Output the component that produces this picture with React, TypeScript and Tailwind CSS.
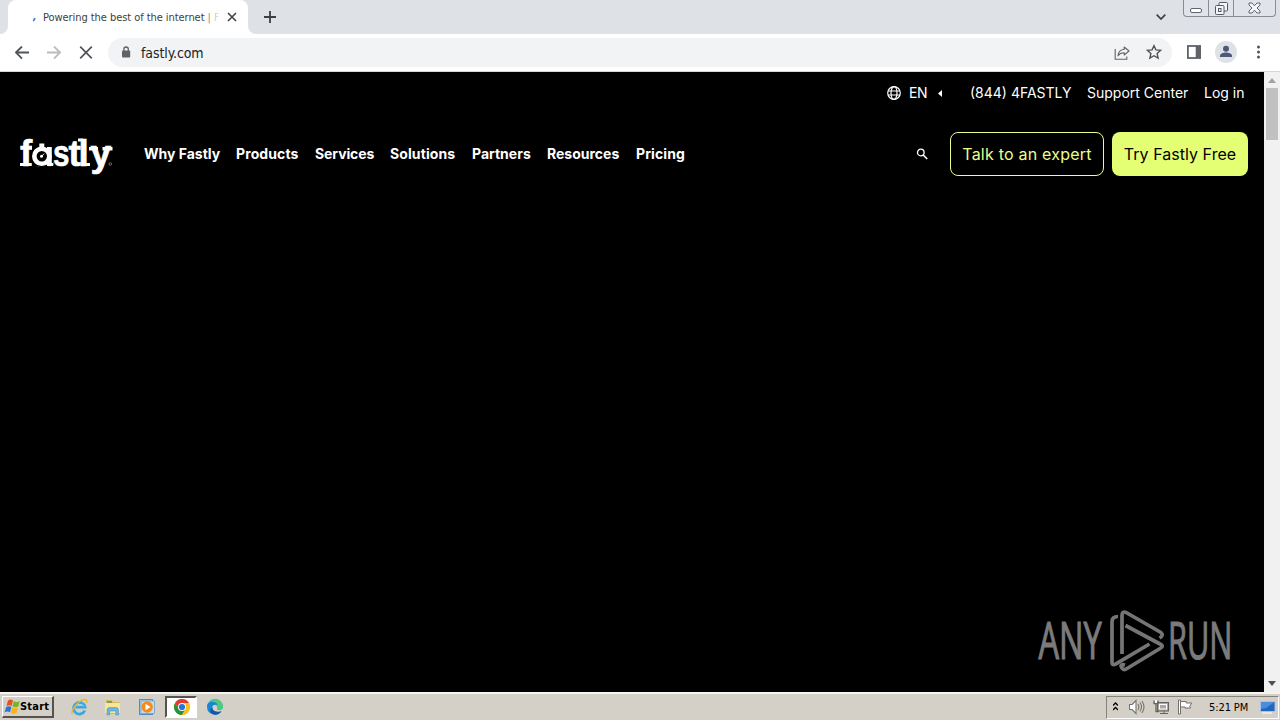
import React from "react";

const TAHOMA = "font-['DejaVu_Sans_Condensed','DejaVu_Sans',sans-serif] [font-stretch:condensed]";

function Tab() {
  return (
    <div className="flex h-[34px] w-[256px] items-end">
      <div className="h-2 w-2 bg-white">
        <div className="h-2 w-2 rounded-br-[8px] bg-[#dee1e6]" />
      </div>
      <div className="flex h-[34px] w-[240px] items-center rounded-t-[8px] bg-white">
        <svg className="ml-[22px] mt-[4px] h-[8px] w-[8px]" viewBox="0 0 8 8">
          <path d="M3.200 6Q4.500 5.500 4.700 3" fill="none" stroke="#3b78d8" strokeWidth="1.800" />
        </svg>
        <div className={`relative ml-[5px] mt-[1px] h-[16px] w-[177px] overflow-hidden whitespace-nowrap text-[11px] leading-[16px] tracking-[-0.060px] text-[#3c4043] ${TAHOMA}`}>
          Powering the best of the internet | F
          <div className="absolute right-0 top-0 h-4 w-[12px] bg-gradient-to-r from-white/30 to-white" />
        </div>
        <svg className="ml-[7px] h-[10px] w-[10px]" viewBox="0 0 10 10">
          <path d="M1 1L9 9M9 1L1 9" stroke="#45494d" strokeWidth="1.700" />
        </svg>
      </div>
      <div className="h-2 w-2 bg-white">
        <div className="h-2 w-2 rounded-bl-[8px] bg-[#dee1e6]" />
      </div>
    </div>
  );
}

function WindowControls() {
  return (
    <div className="mr-[4px] flex h-[17px] w-[93px] self-start rounded-b-[4px] border border-t-0 border-[#888c94] bg-[#e0e3e9]">
      <div className="flex w-[25px] justify-center border-r border-[#888c94] pt-[8px]">
        <div className="h-[5px] w-[12px] rounded-[2px] border border-[#60656d] bg-white" />
      </div>
      <div className="flex w-[25px] justify-center border-r border-[#888c94] pt-[2px]">
        <svg className="h-[13px] w-[13px]" viewBox="0 0 13 13" fill="#f5f6f8" stroke="#555a62">
          <rect x="4" y=".5" width="8.5" height="8.5" rx="1" />
          <rect x=".5" y="3.5" width="8.5" height="9" rx="1" />
          <rect x="3.5" y="6.5" width="2.5" height="3" />
        </svg>
      </div>
      <div className="flex flex-1 justify-center pt-[2px]">
        <svg className="h-[12px] w-[13px]" viewBox="0 0 13 12">
          <path d="M1 1h3l2.500 2.800L9 1h3v2L9 6l3 3v2H9L6.500 8.200 4 11H1V9l3-3-3-3z" fill="#f5f6f8" stroke="#60656d" />
        </svg>
      </div>
    </div>
  );
}

function Toolbar() {
  return (
    <div className="flex h-[37px] items-center bg-white">
      <svg className="ml-[15px] h-[14px] w-[14px]" viewBox="0 0 14 14" fill="none" stroke="#505357" strokeWidth="1.8">
        <path d="M14 6.500H1.500M7 .5L.9 6.500 7 12.700" />
      </svg>
      <svg className="ml-[18px] h-[14px] w-[14px]" viewBox="0 0 14 14" fill="none" stroke="#b9bbbe" strokeWidth="1.8">
        <path d="M0 6.500h12.500M7 .5L13.100 6.500 7 12.700" />
      </svg>
      <svg className="ml-[18px] h-[14px] w-[14px]" viewBox="0 0 14 14" fill="none" stroke="#505357" strokeWidth="1.7">
        <path d="M1.200 .700L12.800 12.300M12.800 .700L1.200 12.300" />
      </svg>
      <div className="ml-[15px] flex h-[29px] w-[1064px] items-center rounded-full bg-[#f1f3f4]">
        <svg className="ml-[13px] mt-[-2px] h-[12px] w-[10px]" viewBox="0 0 10 12">
          <rect x="1" y="4.500" width="8.200" height="7" rx="1" fill="#5f6368" />
          <path d="M2.900 5V3.200a2.200 2.200 0 014.400 0V5" fill="none" stroke="#5f6368" strokeWidth="1.300" />
        </svg>
        <span className={`ml-[10px] text-[14px] leading-[20px] tracking-[-0.100px] text-[#202124] ${TAHOMA}`}>fastly.com</span>
        <svg className="ml-auto h-[14px] w-[16px]" viewBox="0 0 16 14" fill="none" stroke="#5f6368" strokeWidth="1.100">
          <path d="M1.200 3v10.200h11.600v-2.700" />
          <path d="M10.200 1l4.800 4-4.800 4V6.700C7.300 6.600 5.300 7.800 4 9.800 4.400 6.400 6.400 3.700 10.200 3.300z" strokeLinejoin="round" />
        </svg>
        <svg className="ml-[16px] mr-[10px] mt-[-1px] h-[16px] w-[16px]" viewBox="0 0 16 16">
          <path d="M8 1.700l1.900 4.200 4.600.5-3.400 3.100 1 4.500L8 11.700 3.900 14l1-4.500L1.500 6.400l4.600-.5z" fill="none" stroke="#505357" strokeWidth="1.400" />
        </svg>
      </div>
      <svg className="ml-[15px] mt-[-1px] h-[14px] w-[14px]" viewBox="0 0 14 14">
        <rect x=".9" y="1" width="12.200" height="12" fill="white" stroke="#5f6368" strokeWidth="1.800" />
        <rect x="8.700" y="1" width="4.500" height="12" fill="#5f6368" />
      </svg>
      <svg className="ml-[14px] mt-[-1px] h-[22px] w-[22px]" viewBox="0 0 22 22">
        <circle cx="11" cy="11" r="11" fill="#dee1e6" />
        <circle cx="11" cy="7.800" r="3" fill="#4b5879" />
        <path d="M5 16v-1.300c0-2.200 3.500-3.200 6-3.200s6 1 6 3.200V16z" fill="#4b5879" />
      </svg>
      <svg className="ml-[19px] mt-[-1px] h-[14px] w-[4px]" viewBox="0 0 4 14" fill="#505357">
        <circle cx="2.500" cy="2" r="1.500" />
        <circle cx="2.500" cy="7" r="1.500" />
        <circle cx="2.500" cy="12" r="1.500" />
      </svg>
    </div>
  );
}

function Logo() {
  return (
    <svg className="h-[40px] w-[96px] overflow-visible" viewBox="0 0 96 40">
      <g fill="white" stroke="white" strokeWidth=".6" className="font-['Liberation_Sans',sans-serif] text-[37px] font-bold">
        <text x="0 12" y="31.700">fa</text>
        <text x="33" y="31.700" textLength="16.500" lengthAdjust="spacingAndGlyphs">s</text>
        <text x="48.500 58.500 70.500" y="31.700">tly</text>
      </g>
      <path d="M0 29h11.500v3H0zM58 4.500h5v3h-5zM66 29h4v3h-4zM69 13h9v3.500h-9zM82.500 13h10v3.500h-10z" fill="white" />
      <path d="M12 9h21v23.500H12z" fill="black" />
      <circle cx="21.800" cy="22.300" r="7.500" fill="#000" stroke="#fff" strokeWidth="4.600" />
      <path d="M19.300 9.500h5v4h-5zM27 13h4.800v16H33v3h-6z" fill="white" />
      <path d="M0 29h11.500v3H0z" fill="white" />
      <circle cx="21.500" cy="22.300" r="1.500" fill="white" />
      <path d="M21.500 22.300l2.700-2.700" stroke="white" />
      <circle cx="90.300" cy="30" r="1.300" fill="none" stroke="#aaa" strokeWidth=".6" />
    </svg>
  );
}

function Website() {
  return (
    <main className="flex h-[620px] w-[1264px] flex-col bg-black font-['Inter',sans-serif] text-white">
      <div className="flex h-[42px] items-center justify-end pr-[20px] text-[14px] leading-[20px]">
        <svg className="h-[14px] w-[14px]" viewBox="0 0 14 14" fill="none" stroke="white" strokeWidth="1.200">
          <circle cx="7" cy="7" r="6.300" />
          <ellipse cx="7" cy="7" rx="3" ry="6.300" />
          <path d="M1 5h12M1 9h12" />
        </svg>
        <span className="ml-[8px] w-[19px] tracking-[-0.300px]">EN</span>
        <svg className="ml-[10px] h-[7px] w-[4px]" viewBox="0 0 4 7"><path d="M4 0v7L0 3.500z" fill="white" /></svg>
        <span className="ml-[28px] w-[101px] whitespace-nowrap">(844) 4FASTLY</span>
        <span className="ml-[16px] w-[101px] whitespace-nowrap">Support Center</span>
        <span className="ml-[16px] w-[40px] whitespace-nowrap">Log in</span>
      </div>
      <header className="flex h-[80px] items-center pl-[20px] pr-[16px]">
        <Logo />
        <nav className="ml-[28px] flex gap-[16px] whitespace-nowrap text-[14px] font-bold leading-[20px]">
          <span className="w-[76px]">Why Fastly</span>
          <span className="w-[63px] tracking-[0.100px]">Products</span>
          <span className="w-[59px] tracking-[-0.100px]">Services</span>
          <span className="w-[66px] tracking-[0.100px]">Solutions</span>
          <span className="w-[59px]">Partners</span>
          <span className="w-[73px]">Resources</span>
          <span className="w-[49px] tracking-[0.100px]">Pricing</span>
        </nav>
        <svg className="ml-auto mr-[22px] h-[12px] w-[12px]" viewBox="0 0 12 12" fill="none" stroke="white" strokeWidth="1.300">
          <circle cx="4.800" cy="4.500" r="3.300" />
          <path d="M7.200 7l4 4" strokeWidth="1.600" />
        </svg>
        <button className="h-[44px] w-[154px] whitespace-nowrap rounded-[8px] border border-[#e9ff8e] text-[16px] tracking-[0.220px] text-[#e9ff8e]">Talk to an expert</button>
        <button className="ml-[8px] h-[44px] w-[136px] whitespace-nowrap rounded-[8px] bg-[#e5ff75] text-[16px] tracking-[0.040px] text-black">Try Fastly Free</button>
      </header>
      <div className="mt-auto flex h-[84px] justify-end pr-[34px]">
        <svg className="h-[64px] w-[196px] overflow-visible" viewBox="0 0 196 64">
          <g fill="#7b7b7b" stroke="#7b7b7b" strokeWidth="1.200" className="font-['Open_Sans','Liberation_Sans',sans-serif]">
            <g transform="translate(0 51) scale(.55 1)"><text x="8" y="0" fontSize="51" textLength="115" lengthAdjust="spacingAndGlyphs">ANY</text></g>
            <g transform="translate(134 51) scale(.55 1)"><text x="0" y="0" fontSize="51" textLength="117" lengthAdjust="spacingAndGlyphs">RUN</text></g>
          </g>
          <g fill="none" stroke="#757575" strokeWidth="3.700" strokeLinejoin="round">
            <path d="M84 8.500Q78 8.500 78 14v40q0 4 3.500 2.200L115.500 36" />
            <path d="M88 46V8q0-6 5-3l34 19.500q3 3-1.500 5.500" />
            <path d="M91.500 17.500L126 36q4.500 2 0 4.500L93 60.500q-4.500 3-6-2.500 0-2 4-1" />
          </g>
        </svg>
      </div>
    </main>
  );
}

function Scrollbar() {
  return (
    <div className="flex h-[620px] w-[16px] flex-col items-center bg-[#f1f1f1]">
      <div className="flex h-[16px] items-center"><svg className="h-[5px] w-[8px]" viewBox="0 0 8 5"><path d="M4 0l4 5H0z" fill="#a3a3a3" /></svg></div>
      <div className="h-[52px] w-[12px] bg-[#c1c1c1]" />
      <div className="mt-auto flex h-[18px] items-center"><svg className="h-[5px] w-[8px]" viewBox="0 0 8 5"><path d="M4 5l4-5H0z" fill="#505050" /></svg></div>
    </div>
  );
}

function Chrome() {
  return (
    <svg className="ml-[1px] h-[16px] w-[16px]" viewBox="0 0 16 16">
      <circle cx="8" cy="8" r="8" fill="#fbc116" />
      <path d="M1.070 4A8 8 0 0114.930 4H8L4.540 10z" fill="#e33b2e" />
      <path d="M1.070 4L4.540 10 8 12l.001 4A8 8 0 011.070 4z" fill="#229342" />
      <path d="M8 16l3.460-6H4.540L6 13z" fill="#229342" />
      <path d="M14.930 4A8 8 0 018 16l3.460-6L8 4z" fill="#fbc116" />
      <circle cx="8" cy="8" r="4" fill="white" />
      <circle cx="8" cy="8" r="3.100" fill="#2873df" />
    </svg>
  );
}

function Taskbar() {
  return (
    <footer className="flex h-[28px] items-center border-t-2 border-t-[#f5f3ee] bg-[#d4d0c8]">
      <div className="ml-[2px] flex h-[22px] w-[52px] items-center border-b-2 border-l border-r-2 border-t border-b-[#55534f] border-l-white border-r-[#55534f] border-t-white">
        <svg className="ml-[1px] h-[16px] w-[16px]" viewBox="0 0 16 16">
          <path d="M4 1.500q3-1.800 5 0L7.700 7q-2.300-1.500-5.200 0z" fill="#e8501f" />
          <path d="M9.800 2q2.700 1.800 6 0l-1.500 5.500q-3 1.500-5.800 0z" fill="#75b42b" />
          <path d="M2.200 8q3-1.500 5.200 0L6 13.300q-2.500-1.500-5.500 0z" fill="#2d76cf" />
          <path d="M8.200 8.500q3 1.500 5.800 0l-1.500 5.500q-3 1.500-5.800 0z" fill="#f6b31b" />
        </svg>
        <span className="text-[11px] font-bold leading-[14px] tracking-[0.200px] text-black font-['DejaVu_Sans_Condensed','DejaVu_Sans',sans-serif]">Start</span>
      </div>
      <svg className="ml-[16px] h-[18px] w-[18px]" viewBox="0 0 18 18" fill="none">
        <path d="M14.800 12.500a5.800 5.800 0 11.300-3.300H5.500" stroke="#3ca6df" strokeWidth="2.800" />
        <path d="M4 10.500q1-4 5.200-4t5 2" stroke="#9bdcf5" strokeWidth=".8" />
        <path d="M2.500 16C-.5 14 10-.5 16 1.800q1.500 1 .4 3" stroke="#e6b72f" strokeWidth="1.400" />
      </svg>
      <svg className="ml-[16px] h-[17px] w-[18px]" viewBox="0 0 18 17">
        <path d="M2 1h6l1 2h7v12H2z" fill="#dfb956" />
        <path d="M1 4h15v10H1z" fill="#f8e599" />
        <path d="M3 2h5v2H3z" fill="#70a36e" />
        <path d="M3 16v-5q0-2.500 2.500-2.500h6.500q2.500 0 2.500 2.500v5h-2.700v-4H5.700v4z" fill="#6cb6dc" stroke="#4a91b5" strokeWidth=".5" />
      </svg>
      <svg className="ml-[17px] h-[16px] w-[16px]" viewBox="0 0 16 16">
        <rect x=".5" y=".5" width="13" height="15" fill="#a9d0ef" stroke="#548dbd" />
        <rect x="2" y="2" width="13.500" height="12.500" fill="#c3def4" stroke="#6999c2" strokeWidth=".7" />
        <circle cx="8.200" cy="8" r="5.700" fill="#f28c1a" />
        <path d="M6.500 4.700v6.600L11.600 8z" fill="white" />
      </svg>
      <div className="ml-[10px] flex h-[22px] w-[32px] items-center justify-center border-2 border-b-white border-l-[#55534f] border-r-white border-t-[#55534f] bg-white"><Chrome /></div>
      <svg className="ml-[10px] h-[16px] w-[16px]" viewBox="0 0 16 16">
        <path d="M0 8a8 8 0 0116 0c0 3-4 4-6 2.500 1-1 .5-4-2-4.500C4 5 1 6 0 8z" fill="#38bdc0" />
        <path d="M8 0a8 8 0 018 8c0 3-4 4-6 2.500C12 7 8 4 2 3A8 8 0 018 0z" fill="#50c782" />
        <path d="M0 8C0 2 8 1 11 6 9 4.500 4 6 5.500 10c1 2.500 5 3.500 9 2.300A8 8 0 010 8z" fill="#1687d5" />
        <path d="M5.500 8.500c-.3 4 4.500 5.500 9 3.800-3 4.500-9 4.500-11 1C2.600 11 4 9 5.500 8.500z" fill="#1557a4" />
      </svg>
      <div className="ml-auto mr-[1px] flex h-[23px] w-[173px] items-center border border-b-white border-l-[#85827d] border-r-white border-t-[#85827d]">
        <svg className="ml-[6px] mt-[-2px] h-[9px] w-[5px]" viewBox="0 0 5 9" fill="none" stroke="black" strokeWidth="1.300"><path d="M0 3.500L2.500 1 5 3.500M0 8l2.500-2.500L5 8" /></svg>
        <svg className="ml-[11px] h-[16px] w-[17px]" viewBox="0 0 17 16" stroke="#77756f" strokeWidth="1.100" fill="none">
          <path d="M.500 5.500h2.700L7 1.500v13l-3.800-4H.500z" fill="white" />
          <path d="M9 5q1.700 3 0 6M11 3.500q3 4.500 0 9M13 2q4 6 0 12" />
        </svg>
        <svg className="ml-[7px] h-[16px] w-[17px]" viewBox="0 0 17 16" fill="none" stroke="#65635e">
          <rect x="4.500" y="3.500" width="11" height="8.500" fill="#aaa8a3" />
          <rect x="6.500" y="5.500" width="7" height="4.500" stroke="white" />
          <path d="M7 14.500h8M11 12v2.500" />
          <path d="M1 1.500v3h4v-3M3 4.500v8h3" strokeWidth="1.300" />
          <path d="M2 1h2v3H2z" fill="white" stroke="none" />
        </svg>
        <svg className="ml-[7px] h-[16px] w-[16px]" viewBox="0 0 16 16" fill="white" stroke="#73716c">
          <path d="M1.500 1h2v14h-2z" />
          <path d="M3.500 2.500h5.700V4h5.500l-2 3.500 1 1.500H8V8H3.500z" />
        </svg>
        <span className={`ml-[16px] mt-[1px] w-[41px] whitespace-nowrap text-[11px] leading-[14px] tracking-[-0.100px] text-black ${TAHOMA}`}>5:21 PM</span>
        <svg className="ml-[10px] h-[14px] w-[16px]" viewBox="0 0 16 14">
          <rect x=".5" y="1.500" width="14.500" height="10" fill="#2367bd" stroke="#a5c3e7" />
          <path d="M1 2h13.500L6 8 1 9z" fill="#4a8edb" />
          <path d="M2 13h10" stroke="#fff" />
        </svg>
      </div>
    </footer>
  );
}

export default function App() {
  return (
    <div className="flex h-[720px] w-[1280px] flex-col overflow-hidden bg-black">
      <div className="flex h-[34px] bg-[#dee1e6]">
        <Tab />
        <svg className="ml-[8px] mt-[11px] h-[12px] w-[12px]" viewBox="0 0 12 12"><path d="M6 0v12M0 6h12" stroke="#3c4043" strokeWidth="1.800" /></svg>
        <svg className="ml-auto mr-[17px] mt-[14px] h-[6px] w-[10px]" viewBox="0 0 10 6"><path d="M.7.700L5 5 9.300.7" fill="none" stroke="#3c4043" strokeWidth="1.700" /></svg>
        <WindowControls />
      </div>
      <Toolbar />
      <div className="h-px bg-[#d5d7da]" />
      <div className="flex h-[620px]">
        <Website />
        <Scrollbar />
      </div>
      <Taskbar />
    </div>
  );
}
